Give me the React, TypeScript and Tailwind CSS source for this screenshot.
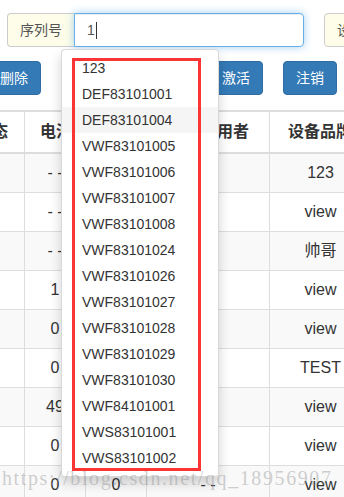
const items = [
  "123",
  "DEF83101001",
  "DEF83101004",
  "VWF83101005",
  "VWF83101006",
  "VWF83101007",
  "VWF83101008",
  "VWF83101024",
  "VWF83101026",
  "VWF83101027",
  "VWF83101028",
  "VWF83101029",
  "VWF83101030",
  "VWF84101001",
  "VWS83101001",
  "VWS83101002",
];

// col3 / col4 sit under the dropdown except on the last row
const rows = [
  { battery: "- -", a: "", user: "", brand: "123" },
  { battery: "- -", a: "", user: "", brand: "view" },
  { battery: "- -", a: "", user: "", brand: "帅哥" },
  { battery: "1", a: "", user: "", brand: "view" },
  { battery: "0", a: "", user: "", brand: "view" },
  { battery: "0", a: "", user: "", brand: "TEST" },
  { battery: "49", a: "", user: "", brand: "view" },
  { battery: "0", a: "", user: "", brand: "view" },
  { battery: "0", a: "0", user: "- -", brand: "view" },
];

const cols = "grid grid-cols-[66px_61px_61px_123px_102px]";
const cell = "flex items-center justify-center whitespace-nowrap border-r border-[#ddd]";

export default function App() {
  return (
    <div className="relative h-[497px] w-[344px] overflow-hidden bg-white font-['Liberation_Sans','Noto_Sans_CJK_SC',sans-serif] text-[#333]">
      {/* search bar */}
      <div className="flex gap-[20px] pl-[7px] pt-[13px]">
        <div className="flex h-[34px] w-[297px] shrink-0">
          <span className="flex items-center rounded-l-[4px] border border-r-0 border-[#ccc] bg-[#fdfde9] px-[12px] text-[14px] text-[#555]">
            序列号
          </span>
          <div className="flex flex-1 items-center rounded-r-[4px] border border-[#66afe9] px-[12px] text-[14px] text-[#555] shadow-[inset_0_1px_1px_rgba(0,0,0,.075),0_0_8px_rgba(102,175,233,.6)]">
            1<span className="ml-[1px] inline-block h-[17px] w-px bg-[#333]" />
          </div>
        </div>
        <div className="flex h-[34px] w-[60px] shrink-0">
          <span className="flex items-center rounded-l-[4px] border border-[#ccc] bg-[#fdfde9] pl-[12px] text-[14px] text-[#555]">
            设
          </span>
        </div>
      </div>

      {/* buttons */}
      <div className="ml-[-13px] mt-[14px] flex gap-[20px]">
        {["删除", "", "", "激活", "注销"].map((b, i) => (
          <button
            key={i}
            className="h-[34px] w-[54px] shrink-0 rounded-[4px] border border-[#2e6da4] bg-[#337ab7] text-[14px] text-white"
          >
            {b}
          </button>
        ))}
      </div>

      {/* table */}
      <div className="ml-[-41px] mt-[15px] w-[413px] border-t-2 border-[#ddd] text-[16px]">
        <div className={`${cols} h-[42px] border-b-2 border-[#ddd] font-bold`}>
          <div className={`${cell} justify-end pr-[16px]`}>状态</div>
          <div className={`${cell} justify-start pl-[15px]`}>电池</div>
          <div className={cell}></div>
          <div className={`${cell} justify-end pr-[20px]`}>用者</div>
          <div className={`${cell} justify-start pl-[18px]`}>设备品牌</div>
        </div>
        {rows.map((r, i) => (
          <div
            key={i}
            className={`${cols} h-[39px] border-b border-[#ddd] ${i % 2 === 0 ? "bg-[#f9f9f9]" : "bg-white"}`}
          >
            <div className={cell}></div>
            <div className={cell}>{r.battery}</div>
            <div className={cell}>{r.a}</div>
            <div className={cell}>{r.user}</div>
            <div className={cell}>{r.brand}</div>
          </div>
        ))}
      </div>

      {/* autocomplete dropdown */}
      <div className="absolute left-[61px] top-[49px] w-[158px] rounded-[4px] border border-[rgba(0,0,0,.15)] bg-white py-[5px] shadow-[0_6px_12px_rgba(0,0,0,.175)]">
        {items.map((it, i) => (
          <div
            key={it}
            className={`h-[26px] px-[20px] text-[14px] leading-[26px] text-[#333] ${i === 2 ? "bg-[#f5f5f5]" : ""}`}
          >
            {it}
          </div>
        ))}
      </div>

      {/* annotation box */}
      <div className="absolute left-[72px] top-[58px] h-[413px] w-[129px] border-[3px] border-[#fb3434]" />

      {/* watermark */}
      <div className="pointer-events-none absolute left-[2px] top-[466px] whitespace-nowrap font-['Liberation_Serif',serif] text-[20px] leading-[24px] tracking-[1.6px] text-[rgba(150,150,150,0.45)]">
        https://blog.csdn.net/qq_18956907
      </div>
    </div>
  );
}
